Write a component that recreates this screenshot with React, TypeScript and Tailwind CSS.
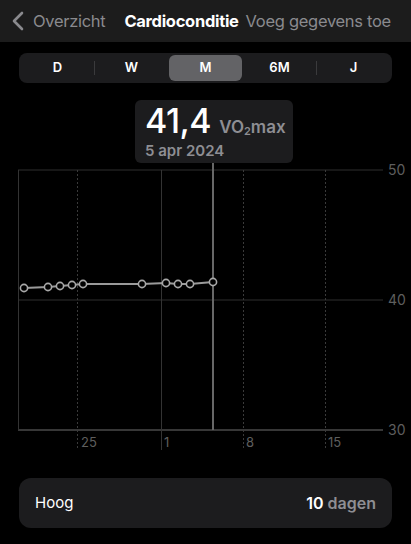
import React from "react";

const segments = ["D", "W", "M", "6M", "J"];

const points: [number, number][] = [
  [24, 205],
  [48, 204],
  [60, 203],
  [72, 202],
  [83, 201],
  [142, 201],
  [166, 200],
  [178, 201],
  [190, 201],
  [213, 199],
];

function Chart() {
  const path = points.map(([x, y], i) => `${i === 0 ? "M" : "L"}${x} ${y}`).join(" ");
  return (
    <svg width={411} height={395} className="block" style={{ fontFamily: "Inter, 'Liberation Sans', sans-serif" }}>
      {/* horizontal grid */}
      <line x1={18} y1={87} x2={383} y2={87} stroke="#2e2e2e" strokeWidth={1} />
      <line x1={18} y1={217} x2={383} y2={217} stroke="#2e2e2e" strokeWidth={1} />
      <line x1={18} y1={347} x2={383} y2={347} stroke="#4a4a4a" strokeWidth={1.5} />
      {/* vertical grid */}
      <line x1={18.5} y1={87} x2={18.5} y2={347} stroke="#333" strokeWidth={1} />
      <line x1={161.5} y1={87} x2={161.5} y2={367} stroke="#333" strokeWidth={1} />
      {[77.5, 243.5, 325.5].map((x) => (
        <line key={x} x1={x} y1={87} x2={x} y2={367} stroke="#3a3a3a" strokeWidth={1} strokeDasharray="2 2" />
      ))}
      {/* selection line */}
      <line x1={213} y1={80} x2={213} y2={347} stroke="#676767" strokeWidth={2} />
      {/* y labels */}
      <g fill="#5e5e5e" fontSize={14}>
        <text x={388} y={92}>50</text>
        <text x={388} y={222}>40</text>
        <text x={388} y={352}>30</text>
      </g>
      {/* x labels */}
      <g fill="#5e5e5e" fontSize={13}>
        <text x={81} y={364}>25</text>
        <text x={164} y={364}>1</text>
        <text x={246} y={364}>8</text>
        <text x={328} y={364}>15</text>
      </g>
      {/* data */}
      <path d={path} stroke="#9a9a9a" strokeWidth={2} fill="none" />
      {points.map(([x, y]) => (
        <circle key={x} cx={x} cy={y} r={3.6} fill="#000" stroke="#a8a8a8" strokeWidth={1.6} />
      ))}
    </svg>
  );
}

export default function App() {
  return (
    <div
      className="w-[411px] h-[544px] bg-black overflow-hidden text-white"
      style={{ fontFamily: "Inter, 'Liberation Sans', sans-serif" }}
    >
      {/* Nav bar */}
      <div className="h-[42px] bg-[#1c1c1c] flex items-center text-[16.5px] tracking-[-0.3px] whitespace-nowrap">
        <svg width={12} height={20} viewBox="0 0 12 20" className="ml-[12px] shrink-0">
          <path d="M10 2 L2 10 L10 18" stroke="#8a8a8e" strokeWidth={2.6} fill="none" strokeLinecap="round" strokeLinejoin="round" />
        </svg>
        <span className="ml-[9px] text-[#8a8a8e]">Overzicht</span>
        <span className="ml-[19px] font-bold text-white">Cardioconditie</span>
        <span className="ml-[7px] text-[#8a8a8e]">Voeg gegevens toe</span>
      </div>

      {/* Segmented control */}
      <div className="mt-[11px] mx-[19px] h-[30px] rounded-[8px] bg-[#1c1c1e] flex items-center px-[2px]">
        {segments.map((s, i) => {
          const active = s === "M";
          const prevActive = segments[i - 1] === "M";
          return (
            <React.Fragment key={s}>
              {i > 0 && (
                <div className={`w-px h-[14px] ${active || prevActive ? "bg-transparent" : "bg-[#3a3a3c]"}`} />
              )}
              <div
                className={`flex-1 h-[26px] flex items-center justify-center text-[13px] font-semibold rounded-[6px] ${
                  active ? "bg-[#636366]" : ""
                }`}
              >
                {s}
              </div>
            </React.Fragment>
          );
        })}
      </div>

      {/* Chart */}
      <div className="relative h-[395px]">
        <Chart />
        <div className="absolute left-[135px] top-[17px] w-[158px] h-[63px] rounded-[6px] bg-[#1c1c1e] pl-[10px] pt-[3px]">
          <div className="flex items-baseline h-[36px]">
            <span className="text-[34px] font-medium leading-[36px] tracking-[-0.5px]">41,4</span>
            <span className="ml-[8px] text-[17px] font-semibold text-[#8e8e93]">
              VO<sub className="text-[11px] align-baseline relative top-[2px]">2</sub>max
            </span>
          </div>
          <div className="text-[15px] font-semibold text-[#8e8e93] leading-[18px] mt-[3px]">5 apr 2024</div>
        </div>
      </div>

      {/* Summary card */}
      <div className="mx-[19px] h-[50px] rounded-[12px] bg-[#1c1c1e] flex items-center justify-between px-[16px]">
        <span className="text-[15px] text-white">Hoog</span>
        <span className="text-[16px] font-semibold">
          <span className="text-white">10</span> <span className="text-[#8e8e93]">dagen</span>
        </span>
      </div>
    </div>
  );
}
